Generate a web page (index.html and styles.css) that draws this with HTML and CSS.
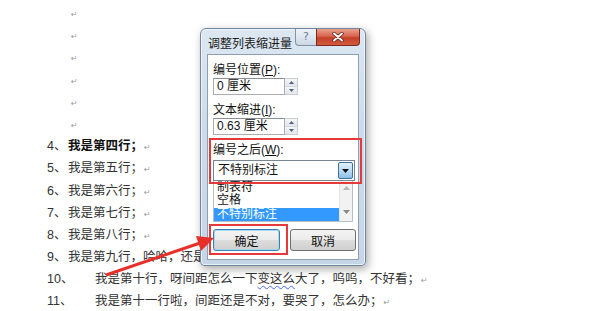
FILE: index.html
```html
<!DOCTYPE html>
<html lang="zh-CN">
<head>
  <meta charset="UTF-8">
  <title>调整列表缩进量</title>
  <link rel="stylesheet" href="styles.css">
</head>
<body>
  <!-- Document body -->
  <section class="doc">
    <p class="blank"><span class="mark">↵</span></p>
    <p class="blank"><span class="mark">↵</span></p>
    <p class="blank"><span class="mark">↵</span></p>
    <p class="blank"><span class="mark">↵</span></p>
    <p class="blank"><span class="mark">↵</span></p>
    <p class="blank"><span class="mark">↵</span></p>
    <p class="item bold"><span class="num">4、</span>我是第四行；<span class="mark">↵</span></p>
    <p class="item"><span class="num">5、</span>我是第五行；<span class="mark">↵</span></p>
    <p class="item"><span class="num">6、</span>我是第六行；<span class="mark">↵</span></p>
    <p class="item"><span class="num">7、</span>我是第七行；<span class="mark">↵</span></p>
    <p class="item"><span class="num">8、</span>我是第八行；<span class="mark">↵</span></p>
    <p class="item"><span class="num">9、</span>我是第九行，哈哈，还是不整齐呀；<span class="mark">↵</span></p>
    <p class="item"><span class="num wide">10、</span>我是第十行，呀间距怎么一下<span class="spell">变这么</span>大了，呜呜，不好看；<span class="mark">↵</span></p>
    <p class="item"><span class="num wide">11、</span>我是第十一行啦，间距还是不对，要哭了，怎么办；<span class="mark">↵</span></p>
  </section>

  <!-- Dialog window -->
  <div class="dialog">
    <div class="titlebar">
      <span class="title">调整列表缩进量</span>
      <div class="caption">
        <span class="cap-help">?</span>
        <span class="cap-close">
          <svg width="12" height="10" viewBox="0 0 12 10">
            <path d="M2 1.5 L10 8.5 M10 1.5 L2 8.5" stroke="#5a1a12" stroke-width="3.4" stroke-linecap="round"/>
            <path d="M2 1.5 L10 8.5 M10 1.5 L2 8.5" stroke="#fff" stroke-width="2" stroke-linecap="round"/>
          </svg>
        </span>
      </div>
    </div>

    <div class="client">
      <div class="label">编号位置(<u>P</u>):</div>
      <div class="spin">
        <div class="field">0 厘米</div>
        <div class="arrows">
          <span class="arr"><svg width="5" height="3" viewBox="0 0 5 3"><path d="M0 3 L2.5 0 L5 3Z" fill="#4d6185"/></svg></span>
          <span class="arr"><svg width="5" height="3" viewBox="0 0 5 3"><path d="M0 0 L2.5 3 L5 0Z" fill="#4d6185"/></svg></span>
        </div>
      </div>

      <div class="label gap">文本缩进(<u>I</u>):</div>
      <div class="spin">
        <div class="field">0.63 厘米</div>
        <div class="arrows">
          <span class="arr"><svg width="5" height="3" viewBox="0 0 5 3"><path d="M0 3 L2.5 0 L5 3Z" fill="#4d6185"/></svg></span>
          <span class="arr"><svg width="5" height="3" viewBox="0 0 5 3"><path d="M0 0 L2.5 3 L5 0Z" fill="#4d6185"/></svg></span>
        </div>
      </div>

      <div class="label gap">编号之后(<u>W</u>):</div>
      <div class="combo">
        <div class="combo-text">不特别标注</div>
        <div class="combo-btn">
          <svg width="7" height="4" viewBox="0 0 7 4"><path d="M0 0 L7 0 L3.5 4Z" fill="#111"/></svg>
        </div>
      </div>
      <div class="listbox">
        <div class="options">
          <div class="opt">制表符</div>
          <div class="opt">空格</div>
          <div class="opt selected">不特别标注</div>
        </div>
        <div class="scroll">
          <svg width="7" height="4" viewBox="0 0 7 4"><path d="M0 4 L3.5 0 L7 4Z" fill="#b5b5b5"/></svg>
          <svg width="7" height="4" viewBox="0 0 7 4"><path d="M0 0 L7 0 L3.5 4Z" fill="#8a8a8a"/></svg>
        </div>
      </div>

      <div class="buttons">
        <button class="btn default">确定</button>
        <button class="btn">取消</button>
      </div>
    </div>
  </div>

  <!-- Red annotations -->
  <div class="mark-box box-combo"></div>
  <div class="mark-box box-ok"></div>
  <svg class="arrow" width="600" height="311" viewBox="0 0 600 311">
    <line x1="106" y1="275" x2="200" y2="243" stroke="#e8302a" stroke-width="3"/>
    <path d="M214 238 L196 236 L201 251 Z" fill="#e8302a"/>
  </svg>
</body>
</html>
```

FILE: styles.css
```css
/* Reset */
* {
  margin: 0;
  padding: 0;
  box-sizing: border-box;
}

body {
  width: 600px;
  height: 311px;
  overflow: hidden;
  background: #fff;
  font-family: 'Liberation Sans', 'Noto Sans CJK SC', sans-serif;
  color: #333;
  position: relative;
}

/* Document */
.doc {
  padding: 2px 0 0 47px;
  font-size: 12.5px;
  line-height: 22.2px;
}

.doc p {
  white-space: nowrap;
  height: 22.2px;
}

.blank {
  padding-left: 23px;
}

.item {
  display: flex;
  align-items: baseline;
}

.item.bold {
  font-weight: bold;
  color: #111;
}

.num {
  display: inline-block;
  width: 21px;
  font-weight: normal;
  color: #333;
}

.num.wide {
  width: 48px;
}

.mark {
  font-family: 'DejaVu Sans', sans-serif;
  font-size: 8px;
  font-weight: normal;
  color: #9a9a9a;
  margin-left: 1px;
}

.spell {
  text-decoration: underline wavy #4a63e6;
  text-decoration-thickness: 1px;
  text-underline-offset: 2px;
}

/* Dialog */
.dialog {
  position: absolute;
  left: 200px;
  top: 28px;
  width: 166px;
  height: 238px;
  border: 1px solid #6f879f;
  border-radius: 6px 6px 4px 4px;
  background: linear-gradient(180deg, #dce7f2 0%, #cddcea 40%, #c6d6e7 100%);
  box-shadow: 2px 3px 8px rgba(0, 0, 0, 0.35), inset 0 0 0 1px rgba(255, 255, 255, 0.6);
  font-size: 12px;
  color: #111;
}

.titlebar {
  display: flex;
  height: 25px;
}

.title {
  padding: 8px 0 0 7px;
  line-height: 14px;
  color: #1a1a1a;
}

.caption {
  margin-left: auto;
  margin-right: 5px;
  display: flex;
  height: 17px;
}

.cap-help {
  width: 21px;
  height: 17px;
  border: 1px solid #8193a8;
  border-top: none;
  border-right: none;
  border-radius: 0 0 0 4px;
  background: linear-gradient(180deg, #eef3f8 0%, #dfe7f0 50%, #cbd7e4 100%);
  color: #6c7f96;
  font-family: 'DejaVu Sans', sans-serif;
  font-size: 11px;
  line-height: 15px;
  text-align: center;
}

.cap-close {
  width: 44px;
  height: 17px;
  border: 1px solid #7a2a1f;
  border-top: none;
  border-radius: 0 0 4px 0;
  background: linear-gradient(180deg, #e9a18f 0%, #d9644c 45%, #c33f28 55%, #d45a3e 100%);
  display: flex;
  align-items: center;
  justify-content: center;
}

.client {
  margin: 0 6px;
  height: 206px;
  border: 1px solid #8e9fb3;
  background: #fff;
  padding: 8px 0 0 5px;
}

.label {
  line-height: 14px;
  height: 14px;
  margin-bottom: 1px;
}

.label u {
  text-decoration: underline;
}

.label.gap {
  margin-top: 8px;
}

.spin {
  display: flex;
  height: 17px;
  width: 85px;
}

.field {
  width: 72px;
  border: 1px solid #abadb3;
  border-top-color: #8a8e97;
  padding-left: 3px;
  line-height: 15px;
}

.arrows {
  width: 13px;
  display: flex;
  flex-direction: column;
  border: 1px solid #c9ccd2;
  border-left: none;
}

.arr {
  flex: 1;
  display: flex;
  align-items: center;
  justify-content: center;
  background: linear-gradient(180deg, #f4f5f7, #e3e6ea);
  border-bottom: 1px solid #d4d7dc;
}

.arr:last-child {
  border-bottom: none;
}

.combo {
  margin-top: 3px;
  display: flex;
  width: 142px;
  height: 21px;
  border: 1px solid #7a8594;
}

.combo-text {
  flex: 1;
  padding-left: 4px;
  line-height: 19px;
}

.combo-btn {
  width: 15px;
  margin: 1px;
  border: 1px solid #3c6f9a;
  border-radius: 2px;
  background: linear-gradient(180deg, #e3f0fb 0%, #bcdcf4 50%, #8cc0e6 100%);
  display: flex;
  align-items: center;
  justify-content: center;
}

.listbox {
  display: flex;
  width: 140px;
  height: 41px;
  border: 1px solid #b9bec6;
  border-top: none;
  overflow: hidden;
}

.options {
  flex: 1;
}

.opt {
  height: 13px;
  line-height: 13px;
  padding-left: 3px;
}

.opt.selected {
  margin-top: 1px;
  background: #3399ff;
  color: #fff;
}

.scroll {
  width: 13px;
  background: #f2f2f2;
  border-left: 1px solid #e4e4e4;
  display: flex;
  flex-direction: column;
  align-items: center;
  justify-content: space-between;
  padding: 5px 0 7px;
}

.buttons {
  margin-top: 7px;
  display: flex;
  gap: 10px;
}

.btn {
  width: 66px;
  height: 22px;
  border: 1px solid #707070;
  border-radius: 3px;
  background: linear-gradient(180deg, #f4f4f4 0%, #ebebeb 48%, #dddddd 52%, #cfcfcf 100%);
  font-family: 'Liberation Sans', 'Noto Sans CJK SC', sans-serif;
  font-size: 12px;
  color: #111;
}

.btn.default {
  width: 67px;
  border-color: #3c7fb1;
  box-shadow: inset 0 0 0 1px #a8d8f0;
}

/* Annotations */
.mark-box {
  position: absolute;
  border: 2px solid #e5393a;
}

.box-combo {
  left: 209px;
  top: 138px;
  width: 153px;
  height: 46px;
}

.box-ok {
  left: 209px;
  top: 224px;
  width: 79px;
  height: 31px;
}

.arrow {
  position: absolute;
  left: 0;
  top: 0;
}
```
